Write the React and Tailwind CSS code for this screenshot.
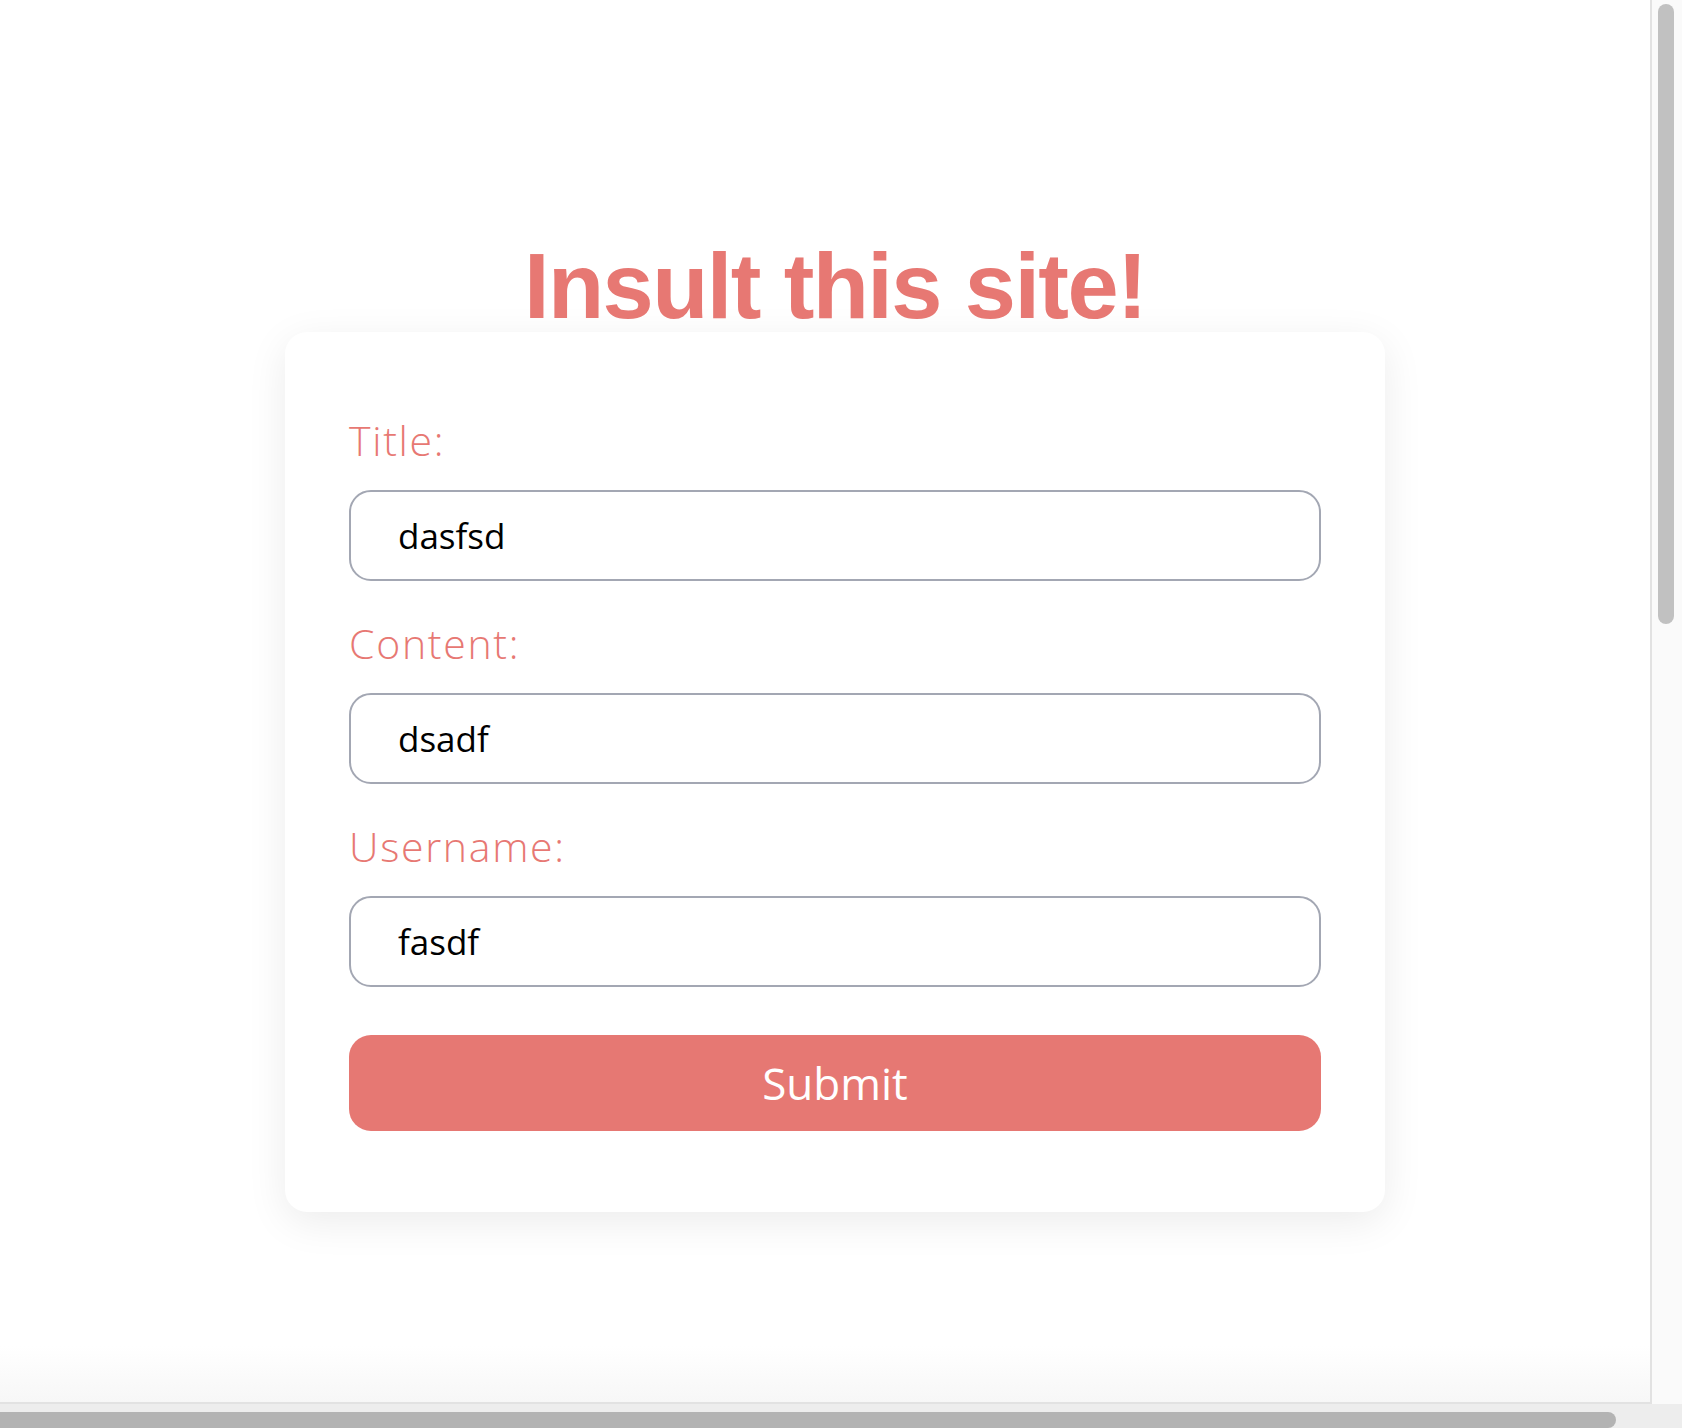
export default function App() {
  const fields = [
    { label: 'Title:', value: 'dasfsd' },
    { label: 'Content:', value: 'dsadf' },
    { label: 'Username:', value: 'fasdf' },
  ]

  return (
    <div className="w-[1682px] h-[1428px] flex flex-col overflow-hidden bg-[#ededed]">
      <div className="flex h-[1404px]">
        <main className="w-[1652px] h-full border-r-2 border-b-2 border-[#e2e2e2] bg-linear-to-b from-white from-[96%] to-[#f7f7f7]">
          <div className="w-[1100px] ml-[285px] pt-[240px]">
            <h1 className="text-center text-[92px] leading-[92px] font-bold text-[#e77873] tracking-[-1.6px] font-['Liberation_Sans',sans-serif]">
              Insult this site!
            </h1>
            <form
              onSubmit={e => e.preventDefault()}
              className="bg-white rounded-[22px] shadow-[0_10px_40px_rgba(0,0,0,0.08)] px-[64px] pt-[84px] pb-[81px] font-['Open_Sans',sans-serif]"
            >
              {fields.map(f => (
                <div key={f.label} className="mb-[38px]">
                  <label className="block text-[41px] leading-[48px] font-[350] tracking-[1.7px] text-[#e77873] mb-[26px]">
                    {f.label}
                  </label>
                  <input
                    type="text"
                    defaultValue={f.value}
                    className="block w-full h-[91px] rounded-[22px] border-2 border-[#a3a7b3] pl-[47px] text-[35px] text-black bg-white focus:outline-none"
                  />
                </div>
              ))}
              <button
                type="submit"
                className="block w-full h-[96px] mt-[48px] rounded-[22px] bg-[#e67873] text-white text-[44px]"
              >
                Submit
              </button>
            </form>
          </div>
        </main>
        <div className="w-[30px] h-full bg-[#fafafa] pt-[4px] pl-[6px]">
          <div className="w-[16px] h-[620px] rounded-full bg-[#c1c1c1]" />
        </div>
      </div>
      <div className="flex-1 pt-[8px]">
        <div className="w-[1616px] h-full rounded-r-full bg-[#b3b3b3]" />
      </div>
    </div>
  )
}
